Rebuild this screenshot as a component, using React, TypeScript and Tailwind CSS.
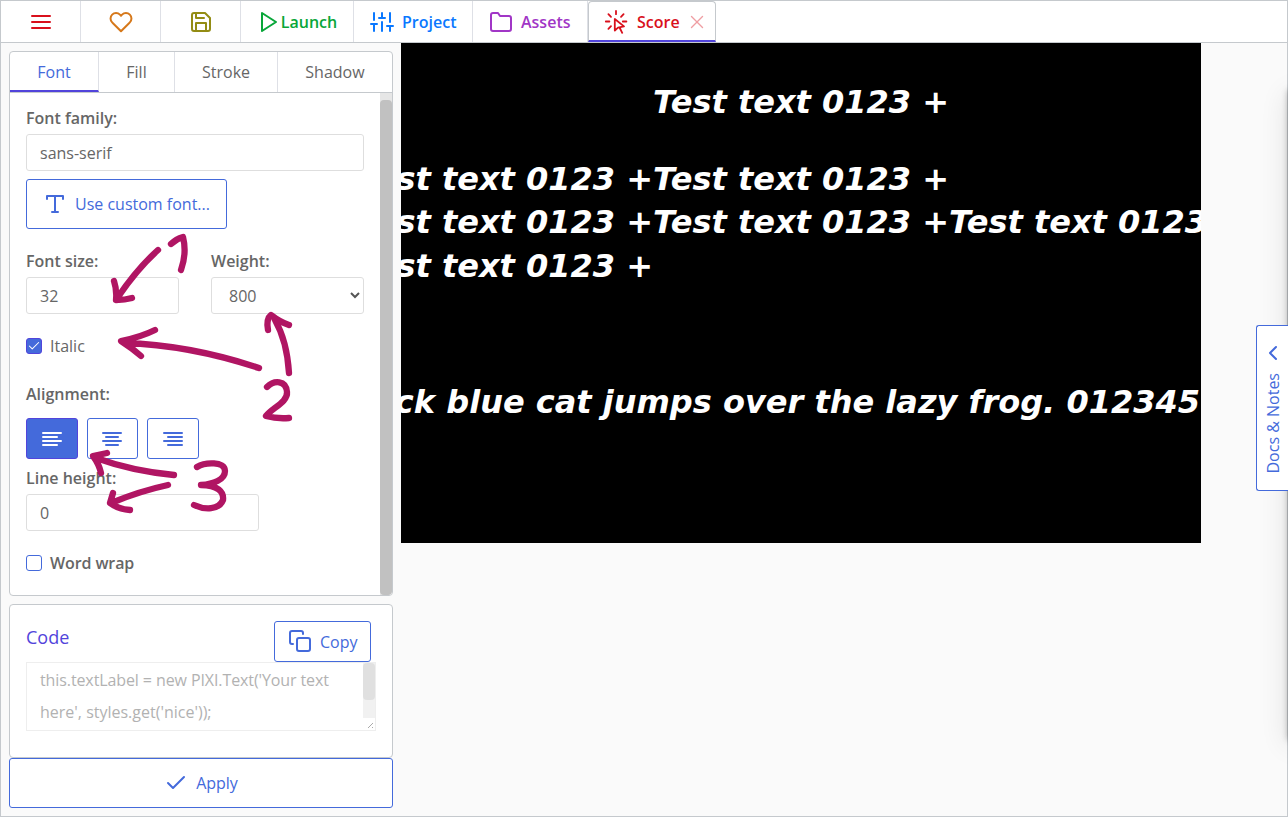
import React from "react";
import {
  FiMenu, FiHeart, FiSave, FiPlay, FiSliders, FiFolder, FiX, FiType, FiCopy,
  FiCheck, FiAlignLeft, FiAlignCenter, FiAlignRight, FiChevronLeft,
} from "react-icons/fi";

const CursorBurst = () => (
  <svg width="24" height="24" viewBox="0 0 24 24" fill="none" stroke="currentColor" strokeWidth="1.8" strokeLinecap="round" strokeLinejoin="round" className="shrink-0">
    <path d="M10.8 9v11.6l3.2-3 6-1.2z" />
    <path d="M15.8 18l2.4 4.8" />
    <path d="M12 1v3.2M1.8 11.5h3.6M18.8 11.5h3.6M4.4 4.2l2.6 2.6M19.6 4.2l-2.6 2.6M4.4 18.8l2.6-2.6" />
  </svg>
);

const TopBar = () => (
  <nav className="flex h-[42px] shrink-0 border-b border-[#c5c9cd] bg-white font-semibold">
    <div className="flex w-20 items-center justify-center border-r border-[#dee0e6] text-[#d9101c]"><FiMenu size={24} /></div>
    <div className="flex w-20 items-center justify-center border-r border-[#dee0e6] text-[#d6781a]"><FiHeart size={24} /></div>
    <div className="flex w-20 items-center justify-center border-r border-[#dee0e6] text-[#938c14]"><FiSave size={24} /></div>
    <div className="flex w-[113px] items-center justify-center border-r border-[#dee0e6] text-[#08a639]"><FiPlay size={24} /><span>Launch</span></div>
    <div className="flex w-[119px] items-center gap-2 border-r border-[#dee0e6] pl-4 text-[#0a78ff]"><FiSliders size={24} /><span>Project</span></div>
    <div className="flex w-[115px] items-center gap-2 border-r border-[#dee0e6] pl-4 text-[#a136c6]"><FiFolder size={24} /><span>Assets</span></div>
    <div className="flex w-[128px] items-center rounded-t border-x border-t border-b-2 border-[#c5c9cd] border-b-[#5144db] pl-[15px] pt-px text-[#d9101c]">
      <CursorBurst />
      <span className="ml-[9px]">Score</span>
      <FiX size={22} strokeWidth={1.5} className="ml-1.5 opacity-40" />
    </div>
  </nav>
);

const Label = ({ children }: { children: React.ReactNode }) => (
  <div className="h-6 font-semibold leading-6">{children}</div>
);

const box = "flex h-[37px] items-center rounded-[3px] border border-[#dedede] bg-white px-[13px]";

const FontPanel = () => (
  <section className="flex h-[545px] shrink-0 flex-col overflow-hidden rounded border border-[#c5c9cd] bg-white">
    <div className="flex h-[41px] shrink-0 border-b border-[#c5c9cd] text-center leading-10">
      <div className="w-[89px] border-b-2 border-r border-b-[#5144db] border-r-[#dee0e6] text-[#446adb]">Font</div>
      <div className="w-[76px] border-r border-[#dee0e6]">Fill</div>
      <div className="w-[103px] border-r border-[#dee0e6]">Stroke</div>
      <div className="flex-1">Shadow</div>
    </div>
    <div className="flex min-h-0 flex-1">
      <div className="flex-1 pl-4 pr-4 pt-[13px]">
        <Label>Font family:</Label>
        <div className={`${box} mt-1`}>sans-serif</div>
        <button className="mt-2 flex h-[50px] w-[201px] items-center rounded-[3px] border border-[#446adb] pl-4 text-[#446adb]">
          <FiType size={24} /><span className="ml-2">Use custom font...</span>
        </button>
        <div className="mt-5 flex gap-8">
          <div className="w-[153px]"><Label>Font size:</Label><div className={`${box} mt-1`}>32</div></div>
          <div className="w-[153px]">
            <Label>Weight:</Label>
            <div className={`${box} mt-1 justify-between pl-[17px] pr-[3px]`}>
              <span>800</span>
              <svg width="10" height="8" viewBox="0 0 10 8" fill="none" stroke="#555" strokeWidth="2" className="mb-0.5"><path d="M1 2l4 4 4-4" /></svg>
            </div>
          </div>
        </div>
        <div className="mt-5 flex h-6 items-center">
          <span className="flex size-4 items-center justify-center rounded-[3px] border border-[#5144db] bg-[#446adb] text-white"><FiCheck size={14} strokeWidth={1.8} className="shrink-0" /></span>
          <span className="ml-2">Italic</span>
        </div>
        <div className="mt-6"><Label>Alignment:</Label></div>
        <div className="mt-3 flex h-[41px]">
          <div className="flex w-[52px] items-center justify-center rounded-[3px] border border-[#5144db] bg-[#446adb] text-white"><FiAlignLeft size={24} /></div>
          <div className="ml-[9px] flex w-[51px] items-center justify-center rounded-[3px] border border-[#446adb] pr-px text-[#446adb]"><FiAlignCenter size={24} /></div>
          <div className="ml-[9px] flex w-[52px] items-center justify-center rounded-[3px] border border-[#446adb] text-[#446adb]"><FiAlignRight size={24} /></div>
        </div>
        <div className="mt-[7px]"><Label>Line height:</Label></div>
        <div className={`${box} mt-1 w-[233px]`}>0</div>
        <div className="mt-5 flex h-6 items-center">
          <span className="size-4 rounded-[3px] border border-[#446adb]" />
          <span className="ml-2 font-semibold tracking-[-0.1px]">Word wrap</span>
        </div>
      </div>
      <div className="w-3 bg-[#e6e6e6] pt-[7px]"><div className="h-full rounded bg-[#c1c1c1]" /></div>
    </div>
  </section>
);

const CodePanel = () => (
  <section className="mt-2 h-[154px] shrink-0 rounded border border-[#c5c9cd] bg-white pl-4 pr-4 pt-4">
    <div className="flex h-[41px] justify-between pr-[5px]">
      <h3 className="text-[18px] leading-8 text-[#5144db]">Code</h3>
      <button className="flex w-[97px] items-center rounded-[3px] border border-[#446adb] pl-[13px] text-[#446adb]">
        <FiCopy size={24} className="mb-0.5" /><span className="ml-2">Copy</span>
      </button>
    </div>
    <div className="flex h-[69px] w-[350px] border border-[#eeeeee]">
      <div className="flex-1 whitespace-pre pl-[13px] pt-px leading-8 text-[#b2b2b2]">
        <div className="tracking-[-0.1px]">this.textLabel = new PIXI.Text('Your text</div>
        <div>here', styles.get('nice'));</div>
      </div>
      <div className="flex w-3 flex-col bg-[#f1f1f1]">
        <div className="h-[37px] rounded bg-[#e0e0e0]" />
        <svg width="12" height="12" viewBox="0 0 12 12" className="mt-auto bg-white"><path d="M5 10l5-5M9 10l1-1" stroke="#aaa" strokeWidth="1" /></svg>
      </div>
    </div>
  </section>
);

const sample = "Test text 0123 +";

const Canvas = () => (
  <div className="relative h-[500px] w-[800px] shrink-0 overflow-hidden whitespace-pre bg-black font-['DejaVu_Sans',sans-serif] text-[32px] font-bold italic leading-10 text-white">
    <div className="absolute left-[252px] top-[39px]">{sample}</div>
    <div className="absolute left-[-44px] top-[116px]">{sample}</div>
    <div className="absolute left-[252px] top-[116px]">{sample}</div>
    <div className="absolute left-[-44px] top-[159px]">{sample}</div>
    <div className="absolute left-[252px] top-[159px]">{sample}</div>
    <div className="absolute left-[548px] top-[159px]">{sample}</div>
    <div className="absolute left-[-44px] top-[203px]">{sample}</div>
    <div className="absolute right-px top-[339px]">quick blue cat jumps over the lazy frog. 012345</div>
  </div>
);

const Annotations = () => (
  <svg className="pointer-events-none absolute left-0 top-0" width="400" height="540" viewBox="0 0 400 540" fill="none" stroke="#b01563" strokeWidth="6.3" strokeLinecap="round" strokeLinejoin="round">
    <path d="M171 244Q176 239 183 237Q187 253 181 270" />
    <path d="M158 250Q137 269 118 297M114 281Q117 290 116 300Q125 300 132 298" />
    <path d="M155 330Q141 337 121 341Q132 348 141 356M124 343Q190 345 259 368" />
    <path d="M268 330Q266 319 271 315Q280 322 289 325M275 320Q287 341 289 373" />
    <path d="M267 387C274 380 286 380 287 392C288 402 272 408 266 416Q277 419 289 418" />
    <path d="M107 453L93 456Q99 464 101 473M96 458Q132 471 174 475" />
    <path d="M168 485Q140 491 111 503M113 493L110 503Q118 509 130 510" />
    <path d="M197 467C205 462 225 461 225 471C225 480 213 484 201 485C218 485 224 492 223 500C219 510 205 510 194 505" />
  </svg>
);

export default function App() {
  return (
    <div className="relative h-[817px] w-[1288px] overflow-hidden font-['Open_Sans','Noto_Sans',sans-serif] text-base text-[#666666]">
      <div className="flex h-full flex-col border border-[#c5c9cd] bg-[#fafafa]">
        <TopBar />
        <main className="flex min-h-0 flex-1">
          <aside className="flex w-[400px] shrink-0 flex-col p-2">
            <FontPanel />
            <CodePanel />
            <button className="flex h-[50px] shrink-0 items-center justify-center rounded-[3px] border border-[#446adb] bg-white text-[#446adb]">
              <FiCheck size={24} /><span className="ml-2">Apply</span>
            </button>
          </aside>
          <Canvas />
        </main>
      </div>
      <div className="absolute left-[1288px] top-[90px] h-[650px] w-5 shadow-[0_0_6px_rgba(0,0,0,0.3),0_4px_28px_rgba(0,0,0,0.12)]" />
      <div className="absolute right-0 top-[325px] flex h-[166px] w-8 flex-col items-center rounded-l-[3px] border border-r-0 border-[#446adb] bg-white pt-[15px] text-[#446adb]">
        <FiChevronLeft size={24} className="shrink-0" />
        <span className="mt-2 rotate-180 whitespace-nowrap [writing-mode:vertical-rl]">Docs &amp; Notes</span>
      </div>
      <Annotations />
    </div>
  );
}
